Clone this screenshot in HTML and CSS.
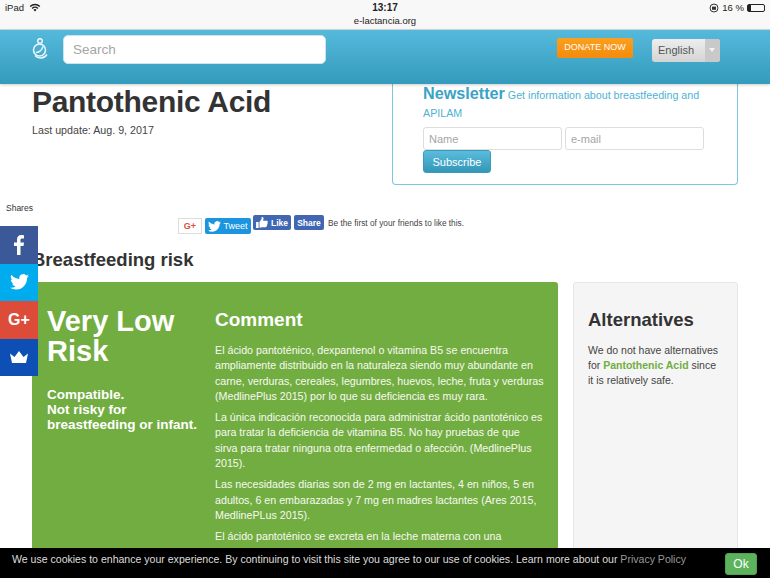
FILE: index.html
```html
<!DOCTYPE html>
<html lang="en">
<head>
    <meta charset="UTF-8">
    <meta name="viewport" content="width=device-width, initial-scale=1.0">
    <title>Pantothenic Acid</title>
    <link rel="stylesheet" href="styles.css">
</head>
<body>
    <div class="status-bar">
        <div class="status-row">
            <div class="status-left">
                <span>iPad</span>
                <svg class="wifi" viewBox="0 0 12 9" width="12" height="9"><path d="M6 8.6 4.4 6.8a2.3 2.3 0 0 1 3.2 0zM3.5 5.9 2.6 4.9a4.9 4.9 0 0 1 6.8 0l-.9 1a3.6 3.6 0 0 0-5 0zM1.7 4 .7 3a7.6 7.6 0 0 1 10.6 0l-1 1a6.2 6.2 0 0 0-8.6 0z" fill="#222"/></svg>
            </div>
            <b class="clock">13:17</b>
            <div class="status-right">
                <svg viewBox="0 0 10 10" width="10" height="10"><circle cx="5" cy="5" r="4" fill="none" stroke="#333"/><rect x="3" y="3.6" width="4" height="3.2" fill="#333"/></svg>
                <span>16 %</span>
                <span class="battery"><i></i></span>
            </div>
        </div>
        <div class="url">e-lactancia.org</div>
    </div>

    <header class="nav">
        <svg class="logo" viewBox="0 0 16 21" width="16" height="21">
            <circle cx="8" cy="3" r="2.3" fill="none" stroke="#eaf7fb" stroke-width="1.5"/>
            <circle cx="7.5" cy="12" r="6" fill="none" stroke="#eaf7fb" stroke-width="1.6"/>
            <path d="M4 14.5C7 14.5 10 12 11 8.5M3 17.5c3 3.5 9 3.5 12-1" fill="none" stroke="#eaf7fb" stroke-width="1.5"/>
        </svg>
        <input class="search" type="text" placeholder="Search">
        <a class="donate">DONATE NOW</a>
        <div class="lang">
            <span class="lang-name">English</span>
            <span class="lang-arrow"></span>
        </div>
    </header>

    <div class="top">
        <div class="title-block">
            <h1>Pantothenic Acid</h1>
            <p>Last update: Aug. 9, 2017</p>
        </div>
        <div class="newsletter">
            <div class="newsletter-text"><b>Newsletter</b> Get information about breastfeeding and APILAM</div>
            <div class="newsletter-fields">
                <input type="text" placeholder="Name">
                <input type="text" placeholder="e-mail">
            </div>
            <button class="subscribe">Subscribe</button>
        </div>
    </div>

    <div class="social">
        <a class="btn-gplus">G+</a>
        <a class="btn-tweet">
            <svg viewBox="0 0 24 20" width="13" height="11"><path d="M24 2.4c-.9.4-1.8.7-2.8.8 1-.6 1.8-1.6 2.2-2.7-1 .6-2 1-3.1 1.2A4.9 4.9 0 0 0 11.900 6.200C7.800 6 4.200 4 1.700.9c-1.300 2.200-.7 5.100 1.500 6.600-.8 0-1.600-.2-2.200-.6 0 2.400 1.700 4.500 3.900 4.900-.7.200-1.500.2-2.200.1.600 2 2.400 3.400 4.600 3.400A9.900 9.900 0 0 1 0 17.300 14 14 0 0 0 7.500 19.500c9.100 0 14.300-7.700 14-14.600 1-.7 1.800-1.500 2.500-2.500z" fill="#fff"/></svg>
            Tweet
        </a>
        <div class="fb-group">
            <a class="btn-fb btn-like">
                <svg viewBox="0 0 14 13" width="12" height="11"><path d="M0 6h3v7H0zM4 6l2.5-3.500V.6c0-.8 2-.8 2.300 1 .1.900-.3 2-.6 2.900h4.300c1.500 0 1.600 1.600.8 2 .7.600.5 1.600-.2 2 .4.700.1 1.500-.5 1.800.2 1-.4 1.700-1.400 1.700H6.500C5.500 12.900 4.800 12.500 4 12.300z" fill="#fff"/></svg>
                Like
            </a>
            <a class="btn-fb btn-share">Share</a>
            <span class="fb-text">Be the first of your friends to like this.</span>
        </div>
    </div>

    <h2 class="risk-heading">Breastfeeding risk</h2>

    <main class="columns">
        <section class="risk-card">
            <div class="risk-level">
                <div class="risk-name">Very Low Risk</div>
                <p>Compatible.<br>Not risky for breastfeeding or infant.</p>
            </div>
            <div class="comment">
                <h3>Comment</h3>
                <p>El ácido pantoténico, dexpantenol o vitamina B5 se encuentra ampliamente distribuido en la naturaleza siendo muy abundante en carne, verduras, cereales, legumbres, huevos, leche, fruta y verduras (MedlinePlus 2015) por lo que su deficiencia es muy rara.</p>
                <p>La única indicación reconocida para administrar ácido pantoténico es para tratar la deficiencia de vitamina B5. No hay pruebas de que sirva para tratar ninguna otra enfermedad o afección. (MedlinePlus 2015).</p>
                <p>Las necesidades diarias son de 2 mg en lactantes, 4 en niños, 5 en adultos, 6 en embarazadas y 7 mg en madres lactantes (Ares 2015, MedlinePLus 2015).</p>
                <p>El ácido pantoténico se excreta en la leche materna con una concentración similar a la del plasma materno.</p>
            </div>
        </section>
        <aside class="alternatives">
            <h3>Alternatives</h3>
            <p>We do not have alternatives for <b>Pantothenic Acid</b> since it is relatively safe.</p>
        </aside>
    </main>

    <div class="shares">
        <div class="shares-label">Shares</div>
        <a class="share-item share-fb">
            <svg viewBox="0 0 10 20" width="10" height="20"><path d="M6.5 20V11h3l.5-3.600H6.500V5.200c0-1 .3-1.700 1.800-1.700H10V.2C9.700.1 8.600 0 7.400 0 4.800 0 3 1.600 3 4.500v2.900H0V11h3v9z" fill="#fff"/></svg>
        </a>
        <a class="share-item share-tw">
            <svg viewBox="0 0 24 20" width="19" height="16"><path d="M24 2.4c-.9.4-1.8.7-2.8.8 1-.6 1.8-1.6 2.2-2.7-1 .6-2 1-3.1 1.2A4.9 4.9 0 0 0 11.900 6.200C7.800 6 4.200 4 1.700.9c-1.300 2.200-.7 5.100 1.500 6.600-.8 0-1.600-.2-2.200-.6 0 2.400 1.700 4.500 3.900 4.900-.7.200-1.500.2-2.200.1.600 2 2.400 3.400 4.600 3.400A9.900 9.900 0 0 1 0 17.300 14 14 0 0 0 7.500 19.500c9.100 0 14.300-7.700 14-14.600 1-.7 1.800-1.500 2.500-2.500z" fill="#fff"/></svg>
        </a>
        <a class="share-item share-gp">G+</a>
        <a class="share-item share-crown">
            <svg viewBox="0 0 18 12" width="18" height="12"><path d="M0 2.5 4.5 6 9 0l4.500 6L18 2.500 16 12H2z" fill="#fff"/></svg>
        </a>
    </div>

    <div class="cookies">
        <p>We use cookies to enhance your experience. By continuing to visit this site you agree to our use of cookies. Learn more about our <a>Privacy Policy</a></p>
        <button class="cookies-ok">Ok</button>
    </div>
</body>
</html>
```

FILE: styles.css
```css
*{
    margin: 0;
    padding: 0;
    box-sizing: border-box;
}
html, body{
    height: 578px;
    overflow: hidden;
}
body{
    position: relative;
    font-family: "Liberation Sans", Arial, sans-serif;
    color: #333;
    background: #fff;
}

/* ipad chrome */
.status-bar{
    height: 30px;
    background: #f8f8f8;
    border-bottom: 1px solid #d8d8d8;
    color: #222;
    font-size: 9.5px;
}
.status-row{
    height: 15px;
    padding: 1px 5px;
    display: flex;
    justify-content: space-between;
    align-items: center;
}
.status-left, .status-right{
    width: 130px;
    display: flex;
    align-items: center;
    gap: 5px;
}
.status-right{
    justify-content: flex-end;
    gap: 3px;
}
.clock{
    font-size: 10px;
}
.battery{
    width: 18px;
    height: 8px;
    border: 1px solid #222;
    border-radius: 2px;
    display: block;
}
.battery i{
    display: block;
    width: 3px;
    height: 100%;
    background: #222;
}
.url{
    text-align: center;
    font-size: 9.5px;
    line-height: 12px;
}

/* nav */
.nav{
    height: 54px;
    background: linear-gradient(#55b9dc, #349bbc);
    display: flex;
    align-items: flex-start;
    padding-left: 32px;
    box-shadow: 0 1px 3px rgba(0, 0, 0, .2);
    position: relative;
}
.logo{
    margin-top: 8px;
}
.search{
    width: 263px;
    height: 29px;
    margin: 5px 0 0 15px;
    padding: 0 9px;
    border: 1px solid #cde3ec;
    border-radius: 5px;
    font: 13.5px "Liberation Sans", Arial, sans-serif;
}
.search::placeholder, .newsletter input::placeholder{
    color: #a5a5a5;
    opacity: 1;
}
.donate{
    width: 76px;
    height: 20px;
    margin: 8px 0 0 231px;
    background: linear-gradient(#faa11f, #f48a0c);
    border-radius: 2px;
    color: #fff;
    font-size: 9px;
    line-height: 19px;
    text-align: center;
}
.lang{
    width: 68px;
    height: 23px;
    margin: 9px 0 0 19px;
    display: flex;
    background: linear-gradient(#eee, #d4d4d4);
    border-radius: 3px;
    color: #555;
    font-size: 11px;
    line-height: 23px;
}
.lang-name{
    flex: 1;
    padding-left: 6px;
}
.lang-arrow{
    width: 15px;
    background: #c9c9c9;
    border-radius: 0 3px 3px 0;
    position: relative;
}
.lang-arrow::after{
    content: "";
    position: absolute;
    top: 9px;
    left: 4px;
    border: 3px solid transparent;
    border-top: 4px solid #f3f3f3;
}

/* title + newsletter */
.top{
    display: flex;
    justify-content: space-between;
    padding: 0 32px;
}
.title-block h1{
    font-size: 30px;
    letter-spacing: -.3px;
    line-height: 35px;
    color: #333;
}
.title-block p{
    font-size: 10.7px;
    margin-top: 5px;
    color: #444;
}
.newsletter{
    width: 346px;
    height: 101px;
    padding: 1px 30px 0;
    border: 1px solid #7cc7df;
    border-top: 0;
    border-radius: 0 0 4px 4px;
    color: #4eb3d3;
    font-size: 10.7px;
    line-height: 17.5px;
}
.newsletter-text b{
    font-size: 16.2px;
    color: #3ba3c6;
}
.newsletter-fields{
    display: flex;
    gap: 3px;
    margin-top: 5px;
}
.newsletter input{
    width: 139px;
    height: 23px;
    padding: 0 5px;
    border: 1px solid #ddd;
    border-radius: 3px;
    font: 11px "Liberation Sans", Arial, sans-serif;
}
.subscribe{
    display: block;
    width: 68px;
    height: 23px;
    background: linear-gradient(#5bbcdc, #3497b8);
    border: 1px solid #3a9cbd;
    border-radius: 3px;
    color: #fff;
    font: 11px "Liberation Sans", Arial, sans-serif;
}

/* social buttons */
.social{
    display: flex;
    align-items: flex-start;
    gap: 3px;
    height: 24px;
    margin-top: 30px;
    padding-left: 178px;
}
.btn-gplus{
    width: 24px;
    height: 16px;
    margin-top: 3px;
    border: 1px solid #ddd;
    color: #dc4e41;
    font-size: 9px;
    font-weight: bold;
    line-height: 14px;
    text-align: center;
}
.btn-tweet{
    width: 46px;
    height: 16px;
    margin-top: 3px;
    background: #1b95e0;
    border-radius: 2px;
    color: #fff;
    font-size: 9px;
    display: flex;
    align-items: center;
    justify-content: center;
    gap: 2px;
}
.fb-group{
    display: flex;
    align-items: center;
    gap: 3px;
    height: 15px;
    margin-left: -1px;
}
.btn-fb{
    height: 15px;
    background: #4267b2;
    border-radius: 2px;
    color: #fff;
    font-size: 8.5px;
    font-weight: bold;
    display: flex;
    align-items: center;
    justify-content: center;
    gap: 3px;
}
.btn-like{ width: 38px; }
.btn-share{ width: 30px; }
.fb-text{
    margin-left: 1px;
    font-size: 8.3px;
    color: #444;
}

.risk-heading{
    font-size: 18.5px;
    line-height: 24px;
    padding-left: 32px;
    margin-top: 9px;
}

/* main columns */
.columns{
    display: flex;
    align-items: flex-start;
    gap: 15px;
    margin-top: 10px;
    padding-left: 32px;
}
.risk-card{
    width: 526px;
    min-height: 300px;
    background: #72ad41;
    border-radius: 3px 3px 0 0;
    color: #f6f9f1;
    display: flex;
    padding: 22px 14px 22px 15px;
    gap: 17px;
}
.risk-level{
    width: 151px;
    flex: none;
    color: #fff;
}
.risk-name{
    margin-top: 2px;
    font-size: 29px;
    font-weight: bold;
    line-height: 30px;
}
.risk-level p{
    margin-top: 21px;
    font-size: 13.5px;
    font-weight: bold;
    line-height: 15px;
}
.comment{
    flex: 1;
}
.comment h3{
    font-size: 19px;
    line-height: 28px;
    margin: 2px 0 9px;
    color: #fff;
}
.comment p{
    font-size: 10.7px;
    line-height: 15.3px;
    margin-bottom: 6px;
}
.alternatives{
    width: 165px;
    height: 300px;
    background: #f5f5f5;
    border: 1px solid #e6e6e6;
    border-radius: 3px;
    padding: 26px 14px;
}
.alternatives h3{
    font-size: 18.5px;
    line-height: 22px;
    color: #333;
    margin-bottom: 12px;
}
.alternatives p{
    font-size: 10.5px;
    line-height: 15px;
    color: #444;
}
.alternatives b{
    color: #72ad41;
}

/* floating share bar */
.shares{
    position: absolute;
    top: 203px;
    left: 0;
    width: 38px;
}
.shares-label{
    padding-left: 6px;
    height: 23px;
    font-size: 8.5px;
    color: #333;
    white-space: nowrap;
}
.share-item{
    height: 37.5px;
    display: flex;
    align-items: center;
    justify-content: center;
    color: #fff;
}
.share-fb{ background: #3b5998; }
.share-tw{ background: #00aced; }
.share-gp{
    background: #dd4b39;
    font-size: 16px;
    font-weight: bold;
}
.share-crown{ background: #0d4fb5; }

/* cookie notice */
.cookies{
    position: absolute;
    left: 0;
    right: 0;
    bottom: 0;
    height: 30px;
    background: #000;
    color: #ddd;
    display: flex;
    justify-content: space-between;
    padding: 5px 13px 0 12px;
    font-size: 10.55px;
}
.cookies a{
    color: #999;
}
.cookies-ok{
    width: 32px;
    height: 22px;
    background: #5cb35c;
    border: 1px solid #4fa34f;
    border-radius: 3px;
    color: #fff;
    font: 12px "Liberation Sans", Arial, sans-serif;
}
```
